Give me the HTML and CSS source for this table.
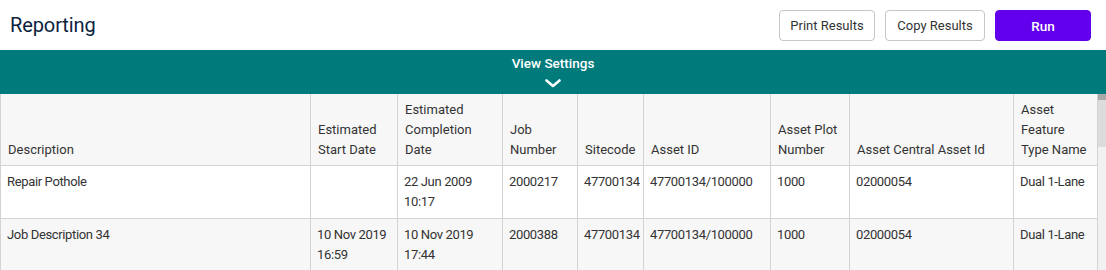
FILE: index.html
```html
<!DOCTYPE html>
<html>
<head>
<meta charset="utf-8">
<link rel="stylesheet" href="styles.css">
</head>
<body>
<header class="topbar">
  <h1 class="title">Reporting</h1>
  <div class="actions">
    <button class="btn btn-print">Print Results</button>
    <button class="btn btn-copy">Copy Results</button>
    <button class="btn btn-primary">Run</button>
  </div>
</header>
<div class="settings-bar">
  <span class="settings-label">View Settings</span>
  <svg class="chevron" width="16" height="9" viewBox="0 0 16 9"><path d="M1.5 1.5 L8 7 L14.5 1.5" fill="none" stroke="#fff" stroke-width="2.6" stroke-linecap="round" stroke-linejoin="round"/></svg>
</div>
<div class="grid-wrap">
  <table class="grid">
    <colgroup>
      <col class="c1"><col class="c2"><col class="c3"><col class="c4"><col class="c5"><col class="c6"><col class="c7"><col class="c8"><col class="c9">
    </colgroup>
    <thead>
      <tr>
        <th>Description</th>
        <th>Estimated Start Date</th>
        <th>Estimated Completion Date</th>
        <th>Job Number</th>
        <th>Sitecode</th>
        <th>Asset ID</th>
        <th>Asset Plot Number</th>
        <th>Asset Central Asset Id</th>
        <th>Asset Feature Type Name</th>
      </tr>
    </thead>
    <tbody>
      <tr class="odd">
        <td>Repair Pothole</td>
        <td></td>
        <td>22 Jun 2009<br>10:17</td>
        <td>2000217</td>
        <td>47700134</td>
        <td>47700134/100000</td>
        <td>1000</td>
        <td>02000054</td>
        <td>Dual 1-Lane</td>
      </tr>
      <tr class="even">
        <td>Job Description 34</td>
        <td>10 Nov 2019<br>16:59</td>
        <td>10 Nov 2019<br>17:44</td>
        <td>2000388</td>
        <td>47700134</td>
        <td>47700134/100000</td>
        <td>1000</td>
        <td>02000054</td>
        <td>Dual 1-Lane</td>
      </tr>
    </tbody>
  </table>
  <div class="scrollbar"><div class="scroll-thumb"></div></div>
</div>
</body>
</html>
```

FILE: styles.css
```css
* { box-sizing: border-box; }
html, body { margin: 0; padding: 0; background: #fff; }
body {
  font-family: Roboto, "Liberation Sans", sans-serif;
  color: #333;
  width: 1106px;
  height: 270px;
  overflow: hidden;
}
.topbar {
  height: 50px;
  display: flex;
  align-items: center;
  justify-content: space-between;
  padding: 0 15px 0 10px;
}
.title {
  margin: 0;
  font-size: 20px;
  font-weight: 400;
  color: #0c2340;
  letter-spacing: -0.1px;
}
.actions {
  display: flex;
  gap: 10px;
  padding-top: 1px;
}
.btn {
  height: 31px;
  padding: 0;
  border: 1px solid #c6c6c6;
  border-radius: 4px;
  background: #fff;
  font-family: inherit;
  font-size: 13px;
  color: #333;
  white-space: nowrap;
  text-align: center;
}
.btn-print { width: 96px; }
.btn-copy { width: 100px; }
.btn-primary {
  width: 96px;
  background: #6200ee;
  border-color: #6200ee;
  color: #fff;
  font-weight: 500;
  font-size: 13.5px;
}
.settings-bar {
  height: 44px;
  background: #007a7a;
  display: flex;
  flex-direction: column;
  align-items: center;
  padding-top: 5px;
  color: #fff;
}
.settings-label {
  font-size: 13.5px;
  font-weight: 500;
  line-height: 17px;
}
.chevron { margin-top: 7px; display: block; }
.grid-wrap {
  display: flex;
  align-items: flex-start;
}
.grid {
  width: 1097px;
  table-layout: fixed;
  border-collapse: collapse;
  font-size: 13px;
  line-height: 20px;
}
.c1 { width: 310px; }
.c2 { width: 87px; }
.c3 { width: 105px; }
.c4 { width: 75px; }
.c5 { width: 66px; }
.c6 { width: 127px; }
.c7 { width: 79px; }
.c8 { width: 164px; }
.c9 { width: 84px; }
.grid th, .grid td {
  border: 1px solid #d3d3d3;
  text-align: left;
  font-weight: 400;
  color: #333;
  overflow: hidden;
}
.grid thead th {
  border-top: none;
  background: #f7f7f7;
  vertical-align: bottom;
  height: 71px;
  padding: 2px 6px 5px 7px;
}
.grid tbody td {
  vertical-align: top;
  height: 51px;
  padding: 6px 1px 6px 6px;
  white-space: nowrap;
  letter-spacing: -0.35px;
}
.grid tbody tr.odd td { background: #fff; }
.grid tbody tr.even td { background: #f7f7f7; }
.scrollbar {
  width: 9px;
  height: 176px;
  background: #f1f1f1;
  border-top: 6px solid #a8a8a8;
}
.scroll-thumb {
  height: 47px;
  background: #dcdcdc;
}
```
